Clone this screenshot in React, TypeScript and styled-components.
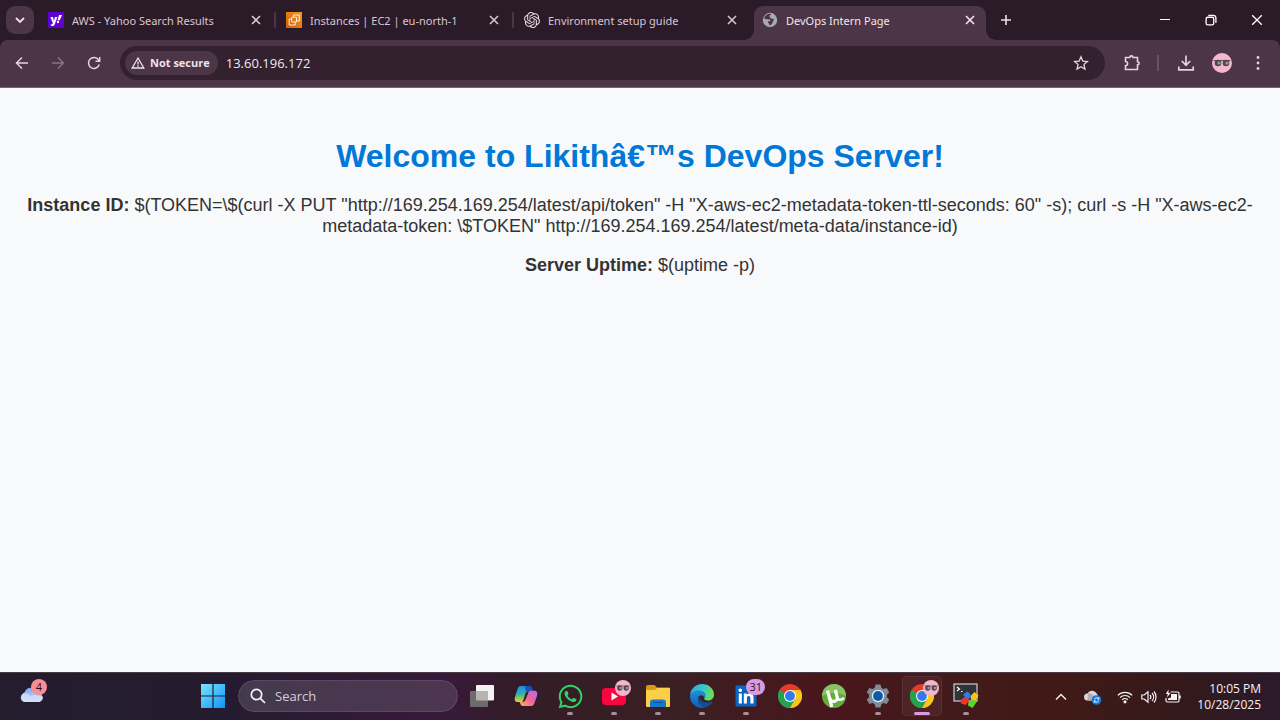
import React from "react";
import styled, { createGlobalStyle } from "styled-components";
import { SiOpenai } from "react-icons/si";
import { FaWhatsapp, FaLinkedin } from "react-icons/fa";

const GlobalStyle = createGlobalStyle`
  * { box-sizing: border-box; }
  body { margin: 0; background: #f8f9fb; }
  button { border: 0; padding: 0; background: none; color: inherit; font: inherit; cursor: pointer; }
  svg { display: block; flex: none; }
`;

const Desktop = styled.div`
  display: flex;
  flex-direction: column;
  min-height: 100vh;
  font-family: "Open Sans", "Noto Sans", sans-serif;
`;

/* ---------- browser frame ---------- */

const TabStrip = styled.header`
  display: flex;
  height: 40px;
  padding-left: 6px;
  background: #2b1b28;
  color: #dccbd8;
`;

const TabSearch = styled.button`
  display: grid;
  place-items: center;
  width: 28px;
  height: 28px;
  margin: 6px 6px 0 0;
  border-radius: 9px;
  background: #4b3546;
  color: #f0e2ec;
`;

const TabList = styled.div`
  display: flex;
  min-width: 0;
`;

const Tab = styled.div<{ $active?: boolean }>`
  position: relative;
  display: flex;
  align-items: center;
  flex: 0 1 232px;
  width: 232px;
  min-width: 0;
  height: 34px;
  margin-top: 6px;
  padding: 0 8px 6px;
  border-radius: 9px 9px 0 0;
  background: ${(p) => (p.$active ? "#4b3546" : "transparent")};
  color: ${(p) => (p.$active ? "#f3e6ef" : "#d8c5d3")};

  &::before,
  &::after {
    content: "";
    display: ${(p) => (p.$active ? "block" : "none")};
    position: absolute;
    bottom: 0;
    width: 9px;
    height: 9px;
  }
  &::before {
    left: -9px;
    background: radial-gradient(circle at 0 0, transparent 8px, #4b3546 9px);
  }
  &::after {
    right: -9px;
    background: radial-gradient(circle at 100% 0, transparent 8px, #4b3546 9px);
  }
`;

const TabTitle = styled.span`
  flex: 1;
  min-width: 0;
  margin-left: 8px;
  padding-top: 2px;
  overflow: hidden;
  white-space: nowrap;
  font-family: "Noto Sans", "Open Sans", sans-serif;
  font-size: 11px;
  line-height: 18px;
`;

const TabClose = styled.button`
  display: grid;
  place-items: center;
  width: 16px;
  height: 16px;
`;

const TabGap = styled.span<{ $line: boolean }>`
  width: 2px;
  height: 16px;
  margin: 12px 2px 0;
  border-radius: 1px;
  background: ${(p) => (p.$line ? "#4b3546" : "transparent")};
`;

const NewTab = styled.button`
  display: grid;
  place-items: center;
  width: 28px;
  height: 40px;
  color: #efe0ea;
`;

const WindowButtons = styled.div`
  display: flex;
  margin-left: auto;
  color: #ffffff;
`;

const WindowButton = styled.button`
  display: grid;
  place-items: center;
  width: 46px;
  height: 40px;
`;

const Toolbar = styled.div`
  display: flex;
  align-items: center;
  height: 48px;
  padding: 0 4px 2px;
  border-bottom: 1px solid #75656f;
  border-radius: 8px 8px 0 0;
  background: #4b3546;
  color: #e6d2e0;
`;

const ToolbarBack = styled.div`
  background: #2b1b28;
`;

const ToolButton = styled.button<{ $dim?: boolean }>`
  display: grid;
  place-items: center;
  width: 36px;
  height: 34px;
  color: ${(p) => (p.$dim ? "#8a7484" : "#e6d2e0")};
`;

const AddressBar = styled.div`
  display: flex;
  align-items: center;
  flex: 1;
  height: 34px;
  margin: 0 9px 0 8px;
  padding: 0 6px 0 5px;
  border-radius: 17px;
  background: #33212f;
`;

const SecurityChip = styled.button`
  display: flex;
  align-items: center;
  gap: 5px;
  height: 24px;
  padding: 0 8px 0 6px;
  border-radius: 12px;
  background: #4b3546;
  color: #f0e2ec;
  font-size: 11px;
  font-weight: 700;
  line-height: 16px;
  white-space: nowrap;
`;

const AddressInput = styled.input`
  flex: 1;
  min-width: 0;
  margin-left: 8px;
  padding: 0;
  border: 0;
  outline: 0;
  background: none;
  color: #f3e6ef;
  font: 13px/20px "Open Sans", sans-serif;
`;

const ToolDivider = styled.span`
  width: 2px;
  height: 16px;
  margin: 0 9px 0 7px;
  background: #6a5163;
`;

/* ---------- web page ---------- */

const PageBody = styled.main`
  flex: 1;
  padding: 47px 8px;
  background: #f8f9fb;
  color: #333333;
  text-align: center;
  font-family: "Liberation Sans", Arial, sans-serif;
`;

const Heading = styled.h1`
  margin: 0 0 18px;
  color: #0078d7;
  font-size: 32px;
  line-height: 42px;
`;

const Line = styled.p`
  margin: 0 0 18px;
  font-size: 18px;
  line-height: 21px;
`;

/* ---------- taskbar ---------- */

const TaskbarRoot = styled.footer`
  display: flex;
  height: 48px;
  border-top: 1px solid #4a3c45;
  background: linear-gradient(
    90deg,
    #231d2e 0%,
    #251b30 18%,
    #38193a 35%,
    #331c28 40%,
    #3b2023 53%,
    #49161c 65%,
    #421a1a 75%,
    #401a16 83%,
    #32191d 94%,
    #2b1a2b 100%
  );
  color: #f7f2f6;
`;

const WidgetArea = styled.div`
  display: flex;
  flex: 0 0 191px;
  padding-left: 10px;
`;

const TaskButton = styled.button<{ $active?: boolean }>`
  position: relative;
  display: grid;
  place-items: center;
  width: 44px;
  height: 46px;

  &::before {
    content: "";
    display: ${(p) => (p.$active ? "block" : "none")};
    position: absolute;
    inset: 3px 2px;
    border: 1px solid #563032;
    border-radius: 4px;
    background: #4c2427;
  }
  svg {
    position: relative;
  }
`;

const Indicator = styled.span<{ $active?: boolean }>`
  position: absolute;
  bottom: 4px;
  left: 50%;
  width: ${(p) => (p.$active ? 16 : 6)}px;
  height: 3px;
  border-radius: 2px;
  background: ${(p) => (p.$active ? "#d79be0" : "#a39097")};
  transform: translateX(-50%);
`;

const CountBadge = styled.span<{ $color: string; $right: number }>`
  position: absolute;
  top: 6px;
  right: ${(p) => p.$right}px;
  min-width: 16px;
  height: 16px;
  padding: 0 3px;
  border-radius: 8px;
  background: ${(p) => p.$color};
  color: #2a1420;
  font-size: 11px;
  line-height: 16px;
`;

const FaceBadge = styled.span`
  position: absolute;
  top: 7px;
  right: 5px;
`;

const SearchBox = styled.label`
  display: flex;
  align-items: center;
  width: 220px;
  min-width: 0;
  gap: 9px;
  height: 32px;
  margin: 7px 2px 0 3px;
  padding: 0 11px;
  border: 1px solid #5d4a60;
  border-radius: 16px;
  background: linear-gradient(90deg, #443a4e, #4d3550);
`;

const SearchInput = styled.input`
  flex: 1;
  width: 100%;
  min-width: 0;
  padding: 0;
  border: 0;
  outline: 0;
  background: none;
  color: #fff;
  font: 13px/20px "Open Sans", sans-serif;

  &::placeholder {
    color: #d6ccd6;
    opacity: 1;
  }
`;

const Tray = styled.div`
  display: flex;
  align-items: center;
  margin-left: auto;
  padding-right: 19px;
`;

const SystemIcons = styled.div`
  display: flex;
  margin: 0 12px 0 4px;
`;

const TrayButton = styled.button<{ $wide?: boolean }>`
  display: grid;
  place-items: center;
  width: ${(p) => (p.$wide ? 32 : 24)}px;
  height: 40px;
`;

const Clock = styled.time`
  text-align: right;
  font-size: 12px;
  line-height: 16px;
  white-space: nowrap;
`;

/* ---------- icons ---------- */

const Stroke = ({ size = 16, w = 1.5, box = 16, children }: { size?: number; w?: number; box?: number; children: React.ReactNode }) => (
  <svg width={size} height={size} viewBox={`0 0 ${box} ${box}`} fill="none" stroke="currentColor" strokeWidth={w}>
    {children}
  </svg>
);

const YahooIcon = () => (
  <svg width="16" height="16" viewBox="0 0 16 16">
    <rect width="16" height="16" fill="#5f01d1" />
    <text x="2.5" y="11" fill="#fff" fontSize="11" fontWeight="800" fontFamily="Open Sans">y</text>
    <path d="M11 3h3l-2.2 5.2H9.6z" fill="#fff" />
    <circle cx="10" cy="10" r="1.2" fill="#fff" />
  </svg>
);

const Ec2Icon = () => (
  <svg width="16" height="16" viewBox="0 0 16 16">
    <defs>
      <linearGradient id="ec2" x1="0" y1="1" x2="1" y2="0">
        <stop offset="0" stopColor="#d35a0a" />
        <stop offset="1" stopColor="#f79a1c" />
      </linearGradient>
    </defs>
    <rect width="16" height="16" fill="url(#ec2)" />
    <g fill="none" stroke="#fff" strokeWidth="0.9">
      <rect x="5.7" y="5.2" width="4.8" height="4.8" rx="0.5" />
      <path d="M5.7 7H3.2v6h6v-2.9M7.5 5V3h5.8v6h-2.6" />
    </g>
  </svg>
);

const GlobeIcon = () => (
  <svg width="16" height="16" viewBox="0 0 16 16">
    <circle cx="8" cy="8" r="7.2" fill="#a8a9b1" />
    <path
      d="M9.2 1.9c-.3 1.2-1.7 1-1.8 2.2-.1 1 .8 1.2 1.2 2 .4.9 1.4.7 2.2.7 1.3.1 1.3 1.5.5 2.2-.9.7-.6 2.1-1.5 3-.7.8-1.6 1.3-2.6 1.5v-2c-1.3-.2-1.6-1-1.5-2.1l2.1-.1c.9-.2.8-1.5-.2-1.7-1-.3-2.6-.3-3.7-.3L2 6.5A6.1 6.1 0 0 1 9.2 1.9z"
      fill="#4b3546"
    />
    <path d="M2.2 6.3l3.5 3.4v1.2l1.5 1.4v1.7A6 6 0 0 1 2.2 6.3z" fill="#a8a9b1" />
  </svg>
);

const CloseIcon = ({ size = 10, w = 1.6 }: { size?: number; w?: number }) => (
  <Stroke size={size} box={10} w={w}>
    <path d="M1 1l8 8M9 1L1 9" />
  </Stroke>
);

const Face = ({ size }: { size: number }) => (
  <svg width={size} height={size} viewBox="0 0 20 20">
    <circle cx="10" cy="10" r="10" fill="#f4b6cd" />
    <path d="M1.5 7.5h17" stroke="#6d4f5c" strokeWidth="1" />
    <circle cx="6" cy="10" r="3.3" fill="#4c4a4c" />
    <circle cx="14" cy="10" r="3.3" fill="#4c4a4c" />
    <circle cx="7" cy="10" r="1.6" fill="#989698" />
    <circle cx="15" cy="10" r="1.6" fill="#989698" />
  </svg>
);

const WeatherIcon = () => (
  <svg width="26" height="26" viewBox="0 0 26 26">
    <defs>
      <linearGradient id="cloud" x1="0" y1="0" x2="0" y2="1">
        <stop offset="0" stopColor="#7fa6ea" />
        <stop offset="1" stopColor="#d5e2fb" />
      </linearGradient>
    </defs>
    <path d="M6 19a5 5 0 0 1-.5-9.5A7 7 0 0 1 18.500 9 5.200 5.200 0 0 1 20 19z" fill="url(#cloud)" />
    <path d="M6 19a4.300 4.300 0 0 1 0-8.600c3 0 5 2 6 3.600 1.500-2 4-2.500 6-1.500l6 1a5.200 5.200 0 0 1-4 5.500z" fill="#d3e0fa" opacity=".8" />
  </svg>
);

const WindowsIcon = () => (
  <svg width="24" height="24" viewBox="0 0 24 24">
    <defs>
      <linearGradient id="win" x1="0" y1="0" x2="1" y2="1">
        <stop offset="0" stopColor="#7ae6fd" />
        <stop offset="1" stopColor="#0c93f5" />
      </linearGradient>
    </defs>
    <path d="M0 0h11.400v11.400H0zM12.600 0H24v11.400H12.600zM0 12.600h11.400V24H0zM12.600 12.600H24V24H12.600z" fill="url(#win)" />
  </svg>
);

const TaskViewIcon = () => (
  <svg width="24" height="24" viewBox="0 0 24 24">
    <rect x="6" y="1" width="18" height="15.5" rx="1" fill="#f2f2f2" />
    <rect x="0" y="7" width="18" height="16" rx="1" fill="#6d6b6c" />
    <path d="M6 7h12v9.5H6z" fill="#b5b4b3" />
  </svg>
);

const CopilotIcon = () => (
  <svg width="24" height="24" viewBox="0 0 24 24">
    <defs>
      <linearGradient id="cpA" x1="0" y1="0" x2="0" y2="1">
        <stop offset="0" stopColor="#1c8de8" />
        <stop offset=".5" stopColor="#30b3a8" />
        <stop offset="1" stopColor="#e5d62b" />
      </linearGradient>
      <linearGradient id="cpB" x1="1" y1="0" x2="0" y2="1">
        <stop offset="0" stopColor="#b06cf3" />
        <stop offset=".5" stopColor="#f0649a" />
        <stop offset="1" stopColor="#ffb054" />
      </linearGradient>
    </defs>
    <path d="M7 2h8c2 0 2.500 1.500 3 3l.6 2h-3c-2 0-3 1-3.500 2.500L10 16c-.6 1.500-1.200 2-2.500 2H4c-3 0-3.800-2-3-5l2.500-8C4.200 3 5 2 7 2z" fill="url(#cpA)" />
    <path d="M12.500 2H15c2 0 2.500 1.500 3 3l.6 2h-3c-1.300 0-2.200.4-2.800 1.200L11 4c-.2-1 .3-2 1.500-2z" fill="#1a4fc4" />
    <path d="M17 22H9c-2 0-2.500-1.500-3-3l-.4-1.200h2.500c1.800 0 2.800-.8 3.300-2.300L13.800 9c.5-1.500 1.300-2.200 2.700-2.200H20c3 0 3.800 2 3 5l-2.500 7.200C19.800 21 19 22 17 22z" fill="url(#cpB)" />
    <path d="M12.800 12.500l1.300-3.500c.2-.6.5-1 .9-1.400l-3 .9c-.3.300-.5.700-.6 1.200L9.500 15.500c-.3 1-.7 1.700-1.300 2.200 1.700 0 2.700-.8 3.200-2.200z" fill="#3a2024" />
  </svg>
);

const YoutubeIcon = () => (
  <svg width="24" height="24" viewBox="0 0 24 24">
    <rect x="0" y="4" width="24" height="17" rx="4" fill="#fb0540" />
    <path d="M9.500 8.500v8l6.500-4z" fill="#fff" />
  </svg>
);

const FolderIcon = () => (
  <svg width="24" height="24" viewBox="0 0 24 24">
    <path d="M0 3a2 2 0 0 1 2-2h6.500l2.500 2.500h12a1 1 0 0 1 1 1V8H0z" fill="#d79a12" />
    <path d="M0 6h9l2-2h12a1 1 0 0 1 1 1v17a1 1 0 0 1-1 1H1a1 1 0 0 1-1-1z" fill="#fccf48" />
    <path d="M4 23v-4.500a3 3 0 0 1 3-3h10a3 3 0 0 1 3 3V23z" fill="#1478cd" />
    <path d="M8 18.500h8" stroke="#0b4d92" strokeWidth="1.2" strokeLinecap="round" />
  </svg>
);

const EdgeIcon = () => (
  <svg width="24" height="24" viewBox="0 0 24 24">
    <defs>
      <linearGradient id="edA" x1="0" y1="0" x2="1" y2="0.3">
        <stop offset="0" stopColor="#2ba4e4" />
        <stop offset=".6" stopColor="#36c7cc" />
        <stop offset="1" stopColor="#66df57" />
      </linearGradient>
      <linearGradient id="edB" x1="0" y1="0" x2="0" y2="1">
        <stop offset="0" stopColor="#1e93dd" />
        <stop offset="1" stopColor="#0e5cb4" />
      </linearGradient>
    </defs>
    <path d="M0 11C.7 4.500 6 0 12 0c7 0 12 5 12 10.500 0 4-3 6-6 6-2.600 0-4-1-3.800-2 .2-.7 1-1.200 1-2.700C15.200 9 12.500 7 9 7 4.500 7 1.500 9.500 0 11z" fill="url(#edA)" />
    <path d="M0 12C1 8 5 6.200 8.500 6.200c4 0 6.700 2.500 6.700 5.600 0 .8-.2 1.500-.7 2C13.500 11.500 11 10.500 9.200 12 7 14 8 18.500 11 21c1.300 1.200 3 2 4.500 2.300C14.400 23.800 13.200 24 12 24 5.400 24 0 18.600 0 12z" fill="url(#edB)" />
    <path d="M9.200 12C7 14 8 18.500 11 21c2 2 5 2.800 6.500 1.600 2-1 3.800-2.600 4.900-4.600.3-.6-.2-.8-.7-.6C17 19.500 10 18.500 9.200 12z" fill="#124c92" />
  </svg>
);

const LinkedinIcon = () => (
  <svg width="24" height="24" viewBox="0 0 24 24">
    <rect x="3" y="3" width="18" height="18" fill="#fff" />
    <FaLinkedin x="0" y="0" size={24} color="#0b65c2" />
  </svg>
);

const ChromeIcon = () => (
  <svg width="24" height="24" viewBox="0 0 24 24">
    <circle cx="12" cy="12" r="12" fill="#e33b2e" />
    <path d="M12 12L1.600 6A12 12 0 0 0 12 24l5.200-9z" fill="#23a350" />
    <path d="M12 6h10.400A12 12 0 0 1 12 24l5.200-9z" fill="#fbc716" />
    <circle cx="12" cy="12" r="6" fill="#fff" />
    <circle cx="12" cy="12" r="4.9" fill="#2f7bea" />
  </svg>
);

const TorrentIcon = () => (
  <svg width="24" height="24" viewBox="0 0 24 24">
    <circle cx="12" cy="12" r="12" fill="#62ad3c" />
    <path d="M0 12a12 12 0 0 1 24 0c-6-4-17-4-24 0z" fill="#85c45f" />
    <g fill="none" stroke="#fff" strokeWidth="3.200">
      <path d="M5.500 6.500L9.800 23" />
      <path d="M7.500 13.500c.8 3.500 3 4.300 5 3.800s3.300-2 2.500-5L13.300 6" />
      <path d="M15 12.500c.8 3.500 3.500 4.500 7 1.500" strokeWidth="2.600" />
    </g>
  </svg>
);

const SettingsIcon = () => (
  <svg width="24" height="24" viewBox="0 0 24 24">
    <g fill="#7f8b98">
      <circle cx="12" cy="12" r="9" />
      {[0, 60, 120].map((a) => (
        <path key={a} d="M9.500 0.500h5l1 4v15l-1 4h-5l-1-4v-15z" transform={`rotate(${a} 12 12)`} />
      ))}
    </g>
    <circle cx="12" cy="12" r="6.200" fill="#e9eef3" />
    <circle cx="12" cy="12" r="4.900" fill="#0e5aa8" />
  </svg>
);

const TerminalIcon = () => (
  <svg width="26" height="26" viewBox="0 0 26 26">
    <rect x="1" y="1" width="23" height="17" fill="#303436" stroke="#cfcdcd" strokeWidth="1.200" />
    <path d="M4 4l2.500 2L4 8M8 8.500h1.500" fill="none" stroke="#fff" strokeWidth="1.200" />
    <path d="M10 12l4-3.500 2.500 1.500 2 4.500-4.500 1.500z" fill="#2c7cf0" />
    <path d="M18 12.500l3.500-3.500 4 3.500-3 5.500-4.500-1z" fill="#f7c51e" />
    <path d="M7.500 17l5-3.500 4 3-3.500 5.500-5-1.500z" fill="#ee3730" />
    <path d="M15.500 19l3.500-2.500 5 2-4.500 6.500-4.500-2.500z" fill="#5ed42b" />
  </svg>
);

const OneDriveIcon = () => (
  <svg width="18" height="16" viewBox="0 0 18 16">
    <path d="M3.500 11.500a3.500 3.500 0 0 1 0-7C5 1.500 9 .5 12 3.500l2 3v5z" fill="#dcd6d8" />
    <path d="M4 4.500C7 4 9 6 14 10l-2 1.500H3.500z" fill="#b5adb0" />
    <circle cx="12.500" cy="11" r="4.800" fill="#1379d8" />
    <path d="M10.500 10.500a2.200 2.200 0 0 1 4-.7m0 1.700a2.200 2.200 0 0 1-4 .7M14.800 8.300v1.700h-1.600M10.200 13.700V12h1.600" fill="none" stroke="#fff" strokeWidth="0.9" />
  </svg>
);

const tabs = [
  { title: "AWS - Yahoo Search Results", icon: <YahooIcon />, line: true },
  { title: "Instances | EC2 | eu-north-1", icon: <Ec2Icon />, line: true },
  { title: "Environment setup guide", icon: <SiOpenai size={16} color="#e4dfe3" />, line: false },
  { title: "DevOps Intern Page", icon: <GlobeIcon />, line: false, active: true },
];

type App = { name: string; icon: React.ReactNode; running?: boolean; active?: boolean; count?: string; face?: boolean };

const apps: App[] = [
  { name: "Task view", icon: <TaskViewIcon /> },
  { name: "Copilot", icon: <CopilotIcon /> },
  { name: "WhatsApp", icon: <FaWhatsapp size={27} color="#2fd366" />, running: true },
  { name: "YouTube", icon: <YoutubeIcon />, running: true, face: true },
  { name: "File Explorer", icon: <FolderIcon />, running: true },
  { name: "Edge", icon: <EdgeIcon />, running: true },
  { name: "LinkedIn", icon: <LinkedinIcon />, running: true, count: "31" },
  { name: "Chrome", icon: <ChromeIcon /> },
  { name: "uTorrent", icon: <TorrentIcon /> },
  { name: "Settings", icon: <SettingsIcon />, running: true },
  { name: "Chrome window", icon: <ChromeIcon />, running: true, active: true, face: true },
  { name: "MobaXterm", icon: <TerminalIcon />, running: true },
];

const BrowserFrame = () => (
  <>
    <TabStrip>
      <TabSearch aria-label="Search tabs">
        <Stroke size={10} box={10} w={1.8}>
          <path d="M1 3l4 4 4-4" />
        </Stroke>
      </TabSearch>
      <TabList>
        {tabs.map((t) => (
          <React.Fragment key={t.title}>
            <Tab $active={t.active}>
              {t.icon}
              <TabTitle>{t.title}</TabTitle>
              <TabClose aria-label="Close tab">
                <CloseIcon />
              </TabClose>
            </Tab>
            <TabGap $line={t.line} />
          </React.Fragment>
        ))}
      </TabList>
      <NewTab aria-label="New tab">
        <Stroke size={12} box={12} w={1.6}>
          <path d="M6 1v10M1 6h10" />
        </Stroke>
      </NewTab>
      <WindowButtons>
        <WindowButton aria-label="Minimize">
          <Stroke size={10} box={10} w={1}>
            <path d="M0 4.500h10" />
          </Stroke>
        </WindowButton>
        <WindowButton aria-label="Restore">
          <Stroke size={12} box={11} w={1.2}>
            <rect x="1" y="3" width="7" height="7" rx="1.5" />
            <path d="M3 1.200h4.500a2.500 2.500 0 0 1 2.500 2.500V8" />
          </Stroke>
        </WindowButton>
        <WindowButton aria-label="Close window">
          <CloseIcon size={12} w={1.1} />
        </WindowButton>
      </WindowButtons>
    </TabStrip>
    <ToolbarBack>
      <Toolbar>
        <ToolButton aria-label="Back">
          <Stroke>
            <path d="M14 8H2.500M8 2.500L2.500 8 8 13.500" />
          </Stroke>
        </ToolButton>
        <ToolButton aria-label="Forward" $dim>
          <Stroke>
            <path d="M2 8h11.500M8 2.500L13.500 8 8 13.500" />
          </Stroke>
        </ToolButton>
        <ToolButton aria-label="Reload">
          <Stroke>
            <path d="M13.300 9.500A5.500 5.500 0 1 1 12.500 4.800L13.500 6M13.700 2v4.200H9.500" />
          </Stroke>
        </ToolButton>
        <AddressBar>
          <SecurityChip>
            <Stroke size={14} box={14} w={1.3}>
              <path d="M7 2L1.200 12h11.600zM7 5.500v3M7 9.300v1.400" />
            </Stroke>
            Not secure
          </SecurityChip>
          <AddressInput aria-label="Address" defaultValue="13.60.196.172" />
          <ToolButton aria-label="Bookmark this page">
            <Stroke w={1.3}>
              <path d="M8 1.800l1.800 4.300 4.700.4-3.600 3 1.100 4.600L8 11.700l-4 2.400 1.100-4.600-3.600-3 4.700-.4z" />
            </Stroke>
          </ToolButton>
        </AddressBar>
        <ToolButton aria-label="Extensions">
          <Stroke size={18} box={18} w={1.6}>
            <path d="M2.500 3.500h4.300a1.600 1.600 0 0 1 3.200 0h4.500v4.200a1.600 1.600 0 0 1 0 3.200v4.600h-12v-3.800a2.100 2.100 0 0 0 0-4.200z" />
          </Stroke>
        </ToolButton>
        <ToolDivider />
        <ToolButton aria-label="Downloads">
          <Stroke size={18} box={18} w={1.7}>
            <path d="M9 1.500v9.500M4.800 7L9 11.200 13.200 7M1.800 12.500v3.300h14.400v-3.300" />
          </Stroke>
        </ToolButton>
        <ToolButton aria-label="Profile">
          <Face size={20} />
        </ToolButton>
        <ToolButton aria-label="Menu">
          <svg width="4" height="16" viewBox="0 0 4 16" fill="currentColor">
            <circle cx="2" cy="2.5" r="1.4" />
            <circle cx="2" cy="8" r="1.4" />
            <circle cx="2" cy="13.5" r="1.4" />
          </svg>
        </ToolButton>
      </Toolbar>
    </ToolbarBack>
  </>
);

const Taskbar = () => (
  <TaskbarRoot>
    <WidgetArea>
      <TaskButton aria-label="Weather">
        <WeatherIcon />
        <CountBadge $color="#fb8d96" $right={7}>4</CountBadge>
      </TaskButton>
    </WidgetArea>
    <TaskButton aria-label="Start">
      <WindowsIcon />
    </TaskButton>
    <SearchBox>
      <Stroke w={1.7}>
        <circle cx="6.5" cy="6.5" r="5.2" />
        <path d="M10.300 10.300l4.700 4.700" />
      </Stroke>
      <SearchInput aria-label="Search" placeholder="Search" />
    </SearchBox>
    {apps.map((a) => (
      <TaskButton key={a.name} aria-label={a.name} $active={a.active}>
        {a.icon}
        {a.running && <Indicator $active={a.active} />}
        {a.count && <CountBadge $color="#d69ae6" $right={3}>{a.count}</CountBadge>}
        {a.face && (
          <FaceBadge>
            <Face size={16} />
          </FaceBadge>
        )}
      </TaskButton>
    ))}
    <Tray>
      <TrayButton $wide aria-label="Show hidden icons">
        <Stroke size={12} box={12} w={1.4}>
          <path d="M1 8.500l5-5 5 5" />
        </Stroke>
      </TrayButton>
      <TrayButton $wide aria-label="OneDrive">
        <OneDriveIcon />
      </TrayButton>
      <SystemIcons>
        <TrayButton aria-label="Wi-Fi">
          <Stroke w={1.2}>
            <path d="M.8 6.300a10.200 10.200 0 0 1 14.400 0M3 8.600a7 7 0 0 1 10 0M5.200 10.800a4 4 0 0 1 5.600 0" />
            <circle cx="8" cy="12.8" r="1" fill="currentColor" />
          </Stroke>
        </TrayButton>
        <TrayButton aria-label="Volume">
          <Stroke w={1.2}>
            <path d="M.8 6v4h2.400L7 13.300V2.700L3.200 6zM9 5.800a3.500 3.500 0 0 1 0 4.400M11 4a6 6 0 0 1 0 8M13 2.500a8.500 8.500 0 0 1 0 11" />
          </Stroke>
        </TrayButton>
        <TrayButton aria-label="Battery">
          <Stroke w={1.2}>
            <path d="M5.500 3h7a1.500 1.500 0 0 1 1.500 1.500v7a1.500 1.500 0 0 1-1.500 1.500H2.500A1.500 1.500 0 0 1 1 11.500V9M15.200 6.500v3" />
            <path d="M6 5h6v6H3V9.500l3-1z" fill="currentColor" stroke="none" />
            <path d="M3.500.5L.8 5h2L2 8.500 5.500 4h-2z" fill="currentColor" stroke="none" />
          </Stroke>
        </TrayButton>
      </SystemIcons>
      <Clock>
        10:05 PM
        <br />
        10/28/2025
      </Clock>
    </Tray>
  </TaskbarRoot>
);

export default function App() {
  return (
    <Desktop>
      <GlobalStyle />
      <BrowserFrame />
      <PageBody>
        <Heading>Welcome to Likithâ€™s DevOps Server!</Heading>
        <Line>
          <strong>Instance ID:</strong>{" "}
          {'$(TOKEN=\\$(curl -X PUT "http://169.254.169.254/latest/api/token" -H "X-aws-ec2-metadata-token-ttl-seconds: 60" -s); curl -s -H "X-aws-ec2-metadata-token: \\$TOKEN" http://169.254.169.254/latest/meta-data/instance-id)'}
        </Line>
        <Line>
          <strong>Server Uptime:</strong> $(uptime -p)
        </Line>
      </PageBody>
      <Taskbar />
    </Desktop>
  );
}
